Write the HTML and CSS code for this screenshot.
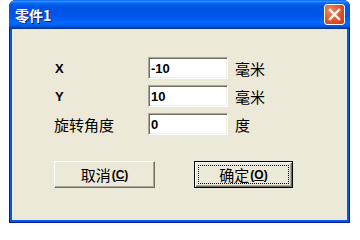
FILE: index.html
```html
<!DOCTYPE html>
<html>
<head>
<meta charset="utf-8">
<link rel="stylesheet" href="styles.css">
</head>
<body>
<div class="window">
  <div class="titlebar">
    <span class="title">零件1</span>
    <span class="close"><svg width="19" height="19" viewBox="0 0 19 19"><path d="M5 5 L14 14 M14 5 L5 14" stroke="#fff" stroke-width="2.4" stroke-linecap="square"/></svg></span>
  </div>
  <div class="client">
    <div class="form">
      <span class="lbl latin">X</span><input class="field" type="text" value="-10"><span class="unit">毫米</span>
      <span class="lbl latin">Y</span><input class="field" type="text" value="10"><span class="unit">毫米</span>
      <span class="lbl">旋转角度</span><input class="field" type="text" value="0"><span class="unit">度</span>
    </div>
    <div class="buttons">
      <button class="btn">取消<span class="key">(<u>C</u>)</span></button>
      <button class="btn default"><span class="focus">确定<span class="key">(<u>O</u>)</span></span></button>
    </div>
  </div>
</div>
</body>
</html>
```
FILE: styles.css
```css
body {
  margin: 0;
  background: #ffffff;
}

.window {
  margin-left: 9px;
  width: 341px;
  height: 223px;
  display: flex;
  flex-direction: column;
  border-radius: 7px 7px 0 0;
  background: #0756E8;
  box-shadow: inset 1px 0 #0019B0, inset -1px 0 #001A9E, inset 0 -1px #001A9E;
}

.titlebar {
  flex: none;
  height: 29px;
  display: flex;
  align-items: center;
  justify-content: space-between;
  padding: 0 5px 0 6px;
  border-radius: 7px 7px 0 0;
  background: linear-gradient(to bottom,
    #0058EE 0%, #3A93FF 4%, #288EFF 6%, #127DFF 8%, #036FFC 10%,
    #0262EE 14%, #0057E5 20%, #0054E3 24%, #0055EB 56%, #005BF5 66%,
    #026AFE 76%, #0062EF 86%, #0052D6 92%, #0040AB 96%, #003092 100%);
}

.title {
  font: bold 14px "Noto Sans CJK SC", sans-serif;
  line-height: 1;
  color: #ffffff;
  text-shadow: 1px 1px #0A1883;
}

.close {
  box-sizing: border-box;
  width: 21px;
  height: 21px;
  border: 1px solid #ffffff;
  border-radius: 3px;
  background: radial-gradient(circle at 30% 30%, #EE8A6A 0%, #E25A32 45%, #C53A12 100%);
  display: flex;
  align-items: center;
  justify-content: center;
}

.client {
  flex: 1;
  margin: 0 3px 3px;
  background: #ECE9D8;
  padding: 28px 0 0 42px;
}

.form {
  display: grid;
  grid-template-columns: 94px 80px auto;
  grid-auto-rows: 22px;
  row-gap: 6px;
  align-items: center;
}

.lbl {
  font: 15px "Noto Sans CJK SC", sans-serif;
  line-height: 1;
  color: #000;
}

.lbl.latin {
  font: bold 13px "Liberation Sans", sans-serif;
  padding-left: 1px;
}

.unit {
  margin-left: 7px;
  font: 15px "Noto Sans CJK SC", sans-serif;
  line-height: 1;
  color: #000;
}

.field {
  box-sizing: border-box;
  width: 80px;
  height: 22px;
  margin: 0;
  padding: 0 0 0 2px;
  border: 1px solid;
  border-color: #ACA899 #FFFFFF #FFFFFF #ACA899;
  box-shadow: inset 1px 1px #716F64, inset -1px -1px #F1EFE2;
  background: #ffffff;
  font: bold 13px "Liberation Sans", sans-serif;
  color: #000;
  outline: none;
}

.buttons {
  display: flex;
  gap: 39px;
  margin-top: 26px;
}

.btn {
  box-sizing: border-box;
  width: 101px;
  height: 27px;
  margin: 0;
  padding: 0;
  border: 1px solid;
  border-color: #FFFFFF #716F64 #716F64 #FFFFFF;
  box-shadow: inset -1px -1px #ACA899;
  background: #ECE9D8;
  color: #000;
  font: 15px "Noto Sans CJK SC", sans-serif;
  line-height: 1;
  display: flex;
  align-items: center;
  justify-content: center;
}

.btn.default {
  width: 99px;
  border: 1px solid #000000;
  box-shadow: inset 1px 1px #FFFFFF, inset -1px -1px #716F64, inset -2px -2px #ACA899;
  padding: 3px;
  align-items: stretch;
}

.focus {
  flex: 1;
  border: 1px dotted #000;
  display: flex;
  align-items: center;
  justify-content: center;
}

.key {
  font: bold 12px "Liberation Sans", sans-serif;
  margin-left: 1px;
}
```
